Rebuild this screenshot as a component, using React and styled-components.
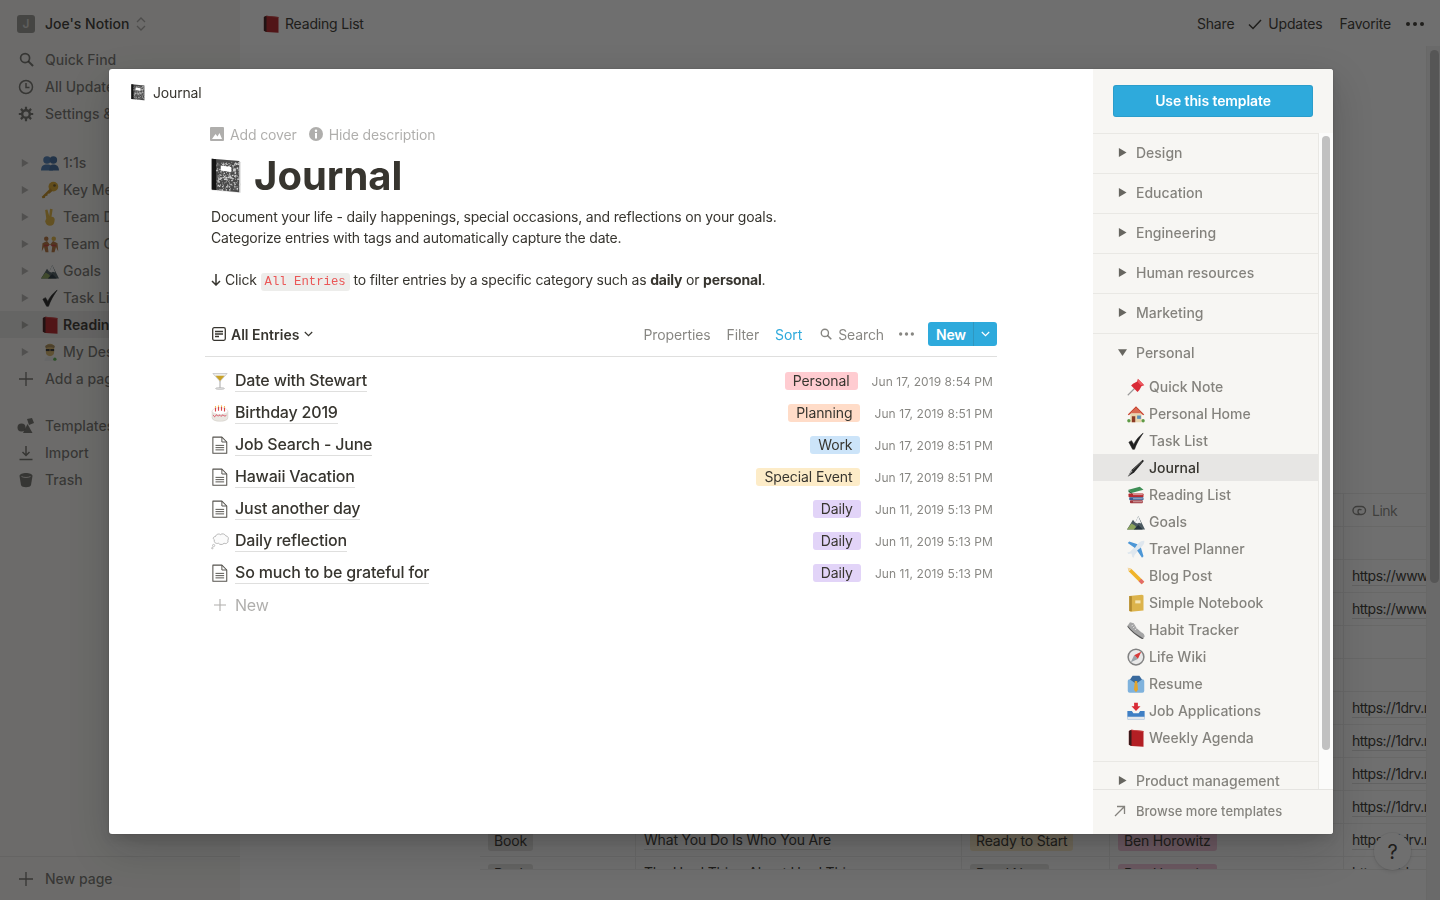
import React from 'react';
import styled, { createGlobalStyle } from 'styled-components';

const GlobalStyle = createGlobalStyle`
  html, body {
    margin: 0;
    height: 100%;
    overflow: hidden;
  }
  body {
    font-family: Inter, "Liberation Sans", sans-serif;
    color: #37352f;
    -webkit-font-smoothing: antialiased;
  }
  #root { height: 100%; }
`;

const BLUE = '#2eaadc';
const DIM = 'rgba(55, 53, 47, 0.6)';
const FAINT = 'rgba(55, 53, 47, 0.4)';
const LINE = 'rgba(55, 53, 47, 0.09)';

/* ---------- little drawn icons ---------- */

const speckles = [];
let seed = 7;
for (let i = 0; i < 240; i++) {
  seed = (seed * 1103 + 12345) % 65536;
  const x = 3.5 + (seed % 155) / 10;
  seed = (seed * 1103 + 12345) % 65536;
  const y = 2.5 + (seed % 190) / 10;
  speckles.push([x, y, i % 3 === 0 ? 0.9 : 0.5]);
}

const emojiArt = {
  composition: (
    <>
      <polygon points="0.500,0.500 19,2 19.800,2.800 19.800,23.200 18.500,23.200 0.500,21.500" fill="#ddd" />
      <polygon points="0.500,0.500 18.800,2 18.800,22.800 0.500,21" fill="#4a4a4a" />
      <polygon points="0.500,0.500 3.400,0.800 3.400,21.300 0.500,21" fill="#151515" />
      {speckles.map(([x, y, s], i) => (
        <rect key={i} x={x} y={y} width={s} height={s} fill="#d2d2d2" />
      ))}
      <polygon points="6.500,5 13.500,6 13.500,9.400 6.500,8.400" fill="#fff" />
    </>
  ),
  page: (
    <>
      <path d="M2.500 1.500h12l6.500 6.500v15H2.500z" fill="#fff" stroke="#55534e" strokeWidth="1.400" strokeLinejoin="round" />
      <path d="M14.500 1.500V8H21M6 12.500h11.500M6 15.500h11.500M6 18.500h11.500" fill="none" stroke="#55534e" strokeWidth="1.300" />
    </>
  ),
  cocktail: (
    <>
      <path d="M2.500 2h19L12 12.500z" fill="#eee" stroke="#a9a9a9" strokeWidth=".7" />
      <path d="M6 5h12l-6 7z" fill="#c9a227" />
      <path d="M12 12v9.500" stroke="#a5a5a5" strokeWidth="1.300" />
      <ellipse cx="12" cy="22" rx="6" ry="1.300" fill="#ddd" stroke="#999" strokeWidth=".5" />
    </>
  ),
  cake: (
    <>
      <path d="M1.500 9.500h21v9c0 6-21 6-21 0z" fill="#e9e6e1" stroke="#c9c5bf" strokeWidth=".6" />
      <ellipse cx="12" cy="9.500" rx="10.500" ry="4.500" fill="#fff" stroke="#d8cbc2" strokeWidth=".6" />
      <path d="M3 14.500c1 3 2.500 3 3.500 .5s2.500 3 4 .5 2.500 3 4 0 2.500 2.500 6-.5" fill="none" stroke="#d8495c" strokeWidth="1.300" />
      <path d="M6 5v5M10 4v5M14 4v5M18 5v5" stroke="#d9434a" strokeWidth="1.500" />
      <path d="M6 3v1.500M10 2v1.500M14 2v1.500M18 3v1.500" stroke="#f2a928" strokeWidth="1.500" />
    </>
  ),
  thought: (
    <>
      <path d="M6 6c1-3.500 5-4 6.500-2.500 2.500-2 6-1 7 1.500 3.500 .5 4.500 3.500 3 6 1 3-2 5.500-5 4-2.500 2.500-6 2-7.500 0-3.500 1-6.500-1-5.500-4.500C2 9 3 6 6 6z" fill="#fbfbfb" stroke="#a9a9a9" strokeWidth="1.100" />
      <circle cx="3.500" cy="18" r="1.500" fill="#fbfbfb" stroke="#a0a0a0" strokeWidth=".8" />
      <circle cx="1.800" cy="21.500" r="1" fill="#fbfbfb" stroke="#a0a0a0" strokeWidth=".8" />
    </>
  ),
  busts: (
    <>
      <circle cx="8" cy="8" r="5" fill="#4d7cb3" />
      <circle cx="16.500" cy="8" r="5" fill="#3f6a9e" />
      <path d="M0 22c0-6 3-8 8-8s8 2 8 8z" fill="#4d7cb3" />
      <path d="M11 22c0-6 2-8 5.500-8S24 16 24 22z" fill="#3f6a9e" />
    </>
  ),
  key: (
    <>
      <circle cx="16.500" cy="7.500" r="6.500" fill="#dca72e" />
      <circle cx="18" cy="6" r="1.800" fill="#6f5a2a" />
      <path d="M12.500 9.500L1 21l1 2 3-.5 1-2.500 2.500-.5.500-2.500 2.500-.5 4-3.500z" fill="#c28c22" />
    </>
  ),
  peace: <path d="M7 14L5.500 2.500 8.500 2l2.500 8.500L12 1l3.500.5-1.500 10c3.500 0 5 2 4 6-.5 4-2.500 6-6 6s-5.500-2-6.500-6z" fill="#e0b33f" />,
  wrestlers: (
    <>
      <circle cx="7" cy="5" r="3" fill="#b5713a" />
      <circle cx="17" cy="5" r="3" fill="#e0b33f" />
      <path d="M2 11l6-3 4 5-3 2 1 8H6l-2-7-3 6zM22 11l-6-3-4 5 3 2-1 8h4l2-7 3 6z" fill="#b5713a" />
      <path d="M4 14h6M14 14h6" stroke="#c93d3d" strokeWidth="1.800" />
    </>
  ),
  mountain: (
    <>
      <path d="M0 22L8 9l3 4 4-9 9 18z" fill="#4b5a60" />
      <path d="M15 4l-4 9 3 1 2-1 3 1z" fill="#f3f3f3" />
      <path d="M0 22l6-8 5 3 3 5z" fill="#8aa35b" />
      <path d="M9 22l6-6 6 6z" fill="#25333d" />
    </>
  ),
  check: <path d="M2.500 13.500l3.500-2 3 5C12 10.500 16 5.500 21.500 1.500 16.500 8.500 12.500 15.500 10 23H7.500z" fill="#1f1f1f" stroke="#1f1f1f" strokeWidth=".8" strokeLinejoin="round" />,
  redbook: (
    <>
      <path d="M2.500 2.500l3.500-1.500 16 1.500V23.500L6 22.500l-3.500-1.500z" fill="#b31f24" />
      <path d="M2.500 2.500L6 1v21.500L2.500 21z" fill="#3a1a1a" />
      <path d="M6 1l16 1.500v1L6 2z" fill="#d04a4a" />
    </>
  ),
  agent: (
    <>
      <path d="M6.500 6.500c0-3.500 2-5.500 5.500-5.500s5.500 2 5.500 5.500v5.500c0 3.500-2 5.500-5.500 5.500S6.500 15.500 6.500 12z" fill="#d8b469" />
      <path d="M6.500 7c1-2 10-2 11 0l1-2.500c-1-3.500-12-3.500-13 0z" fill="#a98a55" />
      <rect x="6.500" y="8" width="5" height="2.800" fill="#333" />
      <rect x="12.500" y="8" width="5" height="2.800" fill="#333" />
      <path d="M4.500 24c0-4.500 3-6.500 7.500-6.500s7.500 2 7.500 6.500z" fill="#ececec" />
      <circle cx="18.500" cy="21.500" r="2.200" fill="#5ab04d" />
    </>
  ),
  pin: (
    <>
      <path d="M1 23l9-9" stroke="#9a9a9a" strokeWidth="1.500" />
      <path d="M14.500 1l8.500 8.500-3.500 1-3 5.500-2.500 2.500-8.500-8.500L8 7.500l5.500-3z" fill="#d92b36" />
      <path d="M15.500 2l6.500 6.500-3.500 1-4.500-4.500z" fill="#ee5b62" />
    </>
  ),
  house: (
    <>
      <path d="M4.500 11h15v12h-15z" fill="#e8d5ae" />
      <path d="M1 12.500L12 1.500l11 11-1.500 1L12 4.500 2.500 13.500z" fill="#c9432f" />
      <path d="M5 11l7-7 7 7z" fill="#d9694f" />
      <rect x="6.500" y="15" width="4.500" height="8" fill="#8b3a24" />
      <rect x="13.500" y="14" width="5" height="4.500" fill="#5a8fb8" />
      <circle cx="2.500" cy="21" r="2.200" fill="#5e9a45" />
      <circle cx="21.500" cy="21" r="2.200" fill="#5e9a45" />
    </>
  ),
  pen: (
    <>
      <path d="M1 23.500L6 14.500 21 1l1.500 1.500L9.500 18z" fill="#222" />
      <path d="M1 23.500l5-9 1.500 1.500z" fill="#aaa" />
      <path d="M8 14.500L20 3.500" stroke="#8c8c8c" strokeWidth=".7" />
    </>
  ),
  books: (
    <>
      <path d="M2 5l15-4 5 4-15 4z" fill="#3f8f56" />
      <path d="M2 5l5 4v2L2 8z" fill="#2c6a3f" />
      <rect x="2" y="10" width="20" height="5" rx="1" fill="#b62b30" />
      <rect x="3" y="15" width="19" height="4" rx="1" fill="#3a5f96" />
      <rect x="4" y="19" width="17" height="4" rx="1" fill="#a2383f" />
      <path d="M8 11.500h13M8 17h13M8 21h12" stroke="#eee" strokeWidth=".8" />
    </>
  ),
  plane: (
    <>
      <path d="M23 1c-2-.5-5 .5-7 2.500L4 15.500l-3.500 1 1 2 4.500-.5 1 4.500 2 1 1-3.500L20.500 8C22.500 6 23.500 3 23 1z" fill="#dfe7ee" />
      <path d="M14 5.500L3 2 1 4l9.500 6.500zM18.500 10l3.500 11.500-2 2L13.500 14z" fill="#4d97d6" />
    </>
  ),
  pencil: (
    <>
      <path d="M1 1l5 1.500L23 19.500 19.500 23 2.500 6z" fill="#f0b429" />
      <path d="M1 1l5 1.500L2.500 6z" fill="#f3d9ad" />
      <path d="M19 15.500l4 4L19.500 23l-4-4z" fill="#e36b6b" />
    </>
  ),
  notebook: (
    <>
      <path d="M3 2.500l17-1.500 2 1V22L5 23.500l-2-1z" fill="#dcb34b" />
      <path d="M3 2.500l3.500 .5v20L3 22.500z" fill="#b38b2f" />
      <rect x="11" y="8.500" width="7" height="4" fill="#f4e4b4" />
    </>
  ),
  shoe: (
    <>
      <path d="M4 1.500l5 1.500 4 6.500 6 5.500c3 1 4.500 3.500 4.500 6l-2.500 2.500C14 19 6 12.500 1 6z" fill="#a5a5a5" />
      <path d="M1 6c5 6.500 13 13 21.500 17.500l-2.500.5C12 19.500 4.500 13 .5 7.500z" fill="#555" />
      <path d="M8 5L6 7M10 7.500l-2 2M12.500 10l-2 2" stroke="#eee" strokeWidth="1.100" />
    </>
  ),
  compass: (
    <>
      <circle cx="12" cy="12" r="10.500" fill="#e9e9e9" stroke="#828282" strokeWidth="2" />
      <path d="M19 5l-9.500 4.500 5 5z" fill="#d83a3a" />
      <path d="M5 19l4.500-9.500 5 5z" fill="#9aa2a8" />
    </>
  ),
  shirt: (
    <>
      <rect x="1" y="5.500" width="22" height="18" rx="2.500" fill="#7fb2dc" />
      <path d="M7.500 1h9l3.500 5-8 5.500L4 6z" fill="#396a9d" />
      <path d="M10.500 8h3l1.200 11.500-2.700 3.500-2.700-3.500z" fill="#e3a52e" />
    </>
  ),
  inbox: (
    <>
      <path d="M9.500 1h5v4.500h3.500L12 12 6 5.500h3.500z" fill="#d92b36" />
      <path d="M.5 12h6l2 3h7l2-3h6v9.500a2 2 0 01-2 2h-19a2 2 0 01-2-2z" fill="#3f7fc4" />
      <path d="M.5 19.500h23v2a2 2 0 01-2 2h-19a2 2 0 01-2-2z" fill="#e5e8eb" />
    </>
  ),
};

const EmojiSvg = styled.svg`
  display: block;
  flex-shrink: 0;
  width: ${(p) => p.$size}px;
  height: ${(p) => p.$size}px;
`;

const Emoji = ({ name, size = 18 }) => (
  <EmojiSvg $size={size} viewBox="0 0 24 24">
    {emojiArt[name]}
  </EmojiSvg>
);

const Glyph = styled.svg`
  display: block;
  flex-shrink: 0;
  width: ${(p) => p.$w || 16}px;
  height: ${(p) => p.$h || p.$w || 16}px;
`;

const Triangle = ({ down, $w = 9 }) => (
  <Glyph $w={$w} viewBox="0 0 10 10">
    <path d={down ? 'M0 1.500h10L5 9z' : 'M1 0l8.500 5L1 10z'} fill="currentColor" />
  </Glyph>
);

const SearchIcon = ({ $w = 16 }) => (
  <Glyph $w={$w} viewBox="0 0 16 16" fill="none" stroke="currentColor" strokeWidth="1.800">
    <circle cx="6.500" cy="6.500" r="4.800" />
    <path d="M10 10l5 5" strokeWidth="2.200" />
  </Glyph>
);

const ClockIcon = () => (
  <Glyph viewBox="0 0 16 16" fill="none" stroke="currentColor" strokeWidth="1.500">
    <circle cx="8" cy="8" r="6.500" />
    <path d="M8 4v4.500h3.500" />
  </Glyph>
);

const GearIcon = () => (
  <Glyph viewBox="0 0 16 16" fill="none" stroke="currentColor">
    <circle cx="8" cy="8" r="3.800" strokeWidth="2.400" />
    <path d="M8 .8v2.400M8 12.800v2.400M.8 8h2.400M12.800 8h2.400M2.900 2.900l1.700 1.700M11.400 11.400l1.700 1.700M13.100 2.900l-1.700 1.700M4.600 11.400l-1.700 1.700" strokeWidth="2.200" />
  </Glyph>
);

const PlusIcon = ({ $w = 14 }) => (
  <Glyph $w={$w} viewBox="0 0 14 14" fill="none" stroke="currentColor" strokeWidth="1.300">
    <path d="M7 0v14M0 7h14" />
  </Glyph>
);

const TemplatesIcon = () => (
  <Glyph $w={18} viewBox="0 0 18 18" fill="currentColor">
    <circle cx="4.500" cy="10.500" r="4" />
    <path d="M10 2l5-1 2 5-5 2z" />
    <path d="M10.500 7l5 9H6z" />
  </Glyph>
);

const ImportIcon = () => (
  <Glyph viewBox="0 0 16 16" fill="none" stroke="currentColor" strokeWidth="1.500">
    <path d="M8 1v9M4.500 7L8 10.500 11.500 7M1.500 14.500h13" />
  </Glyph>
);

const TrashIcon = () => (
  <Glyph viewBox="0 0 16 16" fill="currentColor">
    <path d="M1.500 4c0-4 13-4 13 0l-1.500 9c-.5 3-9.500 3-10 0z" />
    <path d="M3.500 4.500c2 1.300 7 1.300 9 0" stroke="#f7f6f3" strokeWidth=".8" fill="none" />
  </Glyph>
);

const ChevronsIcon = () => (
  <Glyph $w={10} $h={14} viewBox="0 0 10 14" fill="none" stroke="currentColor" strokeWidth="1.300">
    <path d="M1 5l4-4 4 4M1 9l4 4 4-4" />
  </Glyph>
);

const CheckIcon = () => (
  <Glyph $w={14} viewBox="0 0 14 14" fill="none" stroke="currentColor" strokeWidth="1.500">
    <path d="M1 7.500l4 4L13 3" />
  </Glyph>
);

const Dots = ({ $w = 18 }) => (
  <Glyph $w={$w} $h={4} viewBox="0 0 18 4" fill="currentColor">
    <circle cx="2" cy="2" r="2" />
    <circle cx="9" cy="2" r="2" />
    <circle cx="16" cy="2" r="2" />
  </Glyph>
);

const CoverIcon = () => (
  <Glyph $w={14} viewBox="0 0 14 14">
    <rect width="14" height="14" rx="1" fill="currentColor" />
    <path d="M2 12l3.500-5 2 2.500L9.500 6 12 12z" fill="#fff" />
  </Glyph>
);

const InfoIcon = () => (
  <Glyph $w={14} viewBox="0 0 14 14">
    <circle cx="7" cy="7" r="7" fill="currentColor" />
    <rect x="6" y="6" width="2" height="5.500" fill="#fff" />
    <circle cx="7" cy="3.800" r="1.200" fill="#fff" />
  </Glyph>
);

const ViewIcon = () => (
  <Glyph $w={14} viewBox="0 0 14 14" fill="none" stroke="currentColor" strokeWidth="1.300">
    <rect x=".7" y=".7" width="12.600" height="12.600" rx="1.500" />
    <path d="M3 4.500h8M3 7h8M3 9.500h4" />
  </Glyph>
);

const SmallChevron = ({ $w = 9 }) => (
  <Glyph $w={$w} $h={$w * 0.67} viewBox="0 0 9 6" fill="none" stroke="currentColor" strokeWidth="1.200">
    <path d="M.8 1l3.700 3.700L8.200 1" />
  </Glyph>
);

const ArrowOut = () => (
  <Glyph $w={12} viewBox="0 0 12 12" fill="none" stroke="currentColor" strokeWidth="1.300">
    <path d="M1 11L10.500 1.500M3 1.500h7.500V9" />
  </Glyph>
);

const LinkSwirl = () => (
  <Glyph $w={15} $h={13} viewBox="0 0 15 13" fill="none" stroke="currentColor" strokeWidth="1.400">
    <path d="M9 10.500H5a4 4 0 010-8h4.500a4 4 0 010 8c-2.500 0-3.500-1.500-3.500-3.300S8 4.800 9.500 6" />
  </Glyph>
);

const ArrowGlyph = () => (
  <Glyph $w={10} $h={12} viewBox="0 0 10 12" fill="none" stroke="currentColor" strokeWidth="1.500">
    <path d="M5 0v11M1 7l4 4 4-4" />
  </Glyph>
);

/* ---------- app behind the overlay ---------- */

const Shell = styled.div`
  display: flex;
  height: 100%;
  background: #fff;
`;

const Sidebar = styled.aside`
  display: flex;
  flex-direction: column;
  flex: 0 0 240px;
  background: #f7f6f3;
  color: rgba(25, 23, 17, 0.6);
  font-size: 14px;
  font-weight: 500;
`;

const Workspace = styled.div`
  display: flex;
  align-items: center;
  height: 46px;
  box-sizing: border-box;
  padding: 1px 0 0 17px;
  color: #37352f;
`;

const Avatar = styled.div`
  display: flex;
  align-items: center;
  justify-content: center;
  width: 18px;
  height: 18px;
  margin-right: 10px;
  border-radius: 3px;
  background: rgba(55, 53, 47, 0.5);
  color: rgba(255, 255, 255, 0.6);
  font-size: 12px;
  font-weight: 600;
`;

const WorkspaceChevrons = styled.span`
  margin-left: 7px;
  color: rgba(55, 53, 47, 0.4);
`;

const NavGroup = styled.nav`
  display: flex;
  flex-direction: column;
  margin-bottom: ${(p) => p.$gap || 0}px;
`;

const NavRow = styled.div`
  display: flex;
  align-items: center;
  height: 27px;
  padding-left: 18px;
  white-space: nowrap;
`;

const NavIcon = styled.span`
  display: flex;
  justify-content: center;
  width: 16px;
  margin-right: 11px;
`;

const TreeRow = styled.div`
  display: flex;
  align-items: center;
  height: 27px;
  padding-left: 21px;
  white-space: nowrap;
  background: ${(p) => (p.$active ? 'rgba(55, 53, 47, 0.08)' : 'transparent')};
  color: ${(p) => (p.$active ? '#37352f' : 'inherit')};
  font-weight: ${(p) => (p.$active ? 600 : 500)};
`;

const TreeToggle = styled.span`
  width: 20px;
  color: rgba(55, 53, 47, 0.35);
`;

const TreeLabel = styled.span`
  margin-left: 4px;
`;

const SidebarFill = styled.div`
  flex: 1;
`;

const NewPage = styled(NavRow)`
  height: 44px;
  box-sizing: border-box;
  border-top: 1px solid ${LINE};
`;

const Main = styled.main`
  display: flex;
  flex-direction: column;
  flex: 1;
  min-width: 0;
`;

const Topbar = styled.header`
  display: flex;
  align-items: center;
  flex: 0 0 46px;
  box-sizing: border-box;
  padding: 1px 16px 0 22px;
  font-size: 14px;
  letter-spacing: -0.19px;
`;

const Crumb = styled.div`
  display: flex;
  align-items: center;
  gap: 5px;
  flex: 1;
`;

const TopAction = styled.span`
  display: flex;
  align-items: center;
  gap: 6px;
  margin-left: ${(p) => p.$gap}px;
`;

const Stage = styled.div`
  display: flex;
  flex: 1;
  min-height: 0;
`;

const Scroller = styled.div`
  flex: 1;
  min-width: 0;
  padding-left: 240px;
  border-right: 1px solid ${LINE};
`;

const TableClip = styled.div`
  height: 824px;
  padding-top: 447px;
  box-sizing: border-box;
  overflow: hidden;
  border-bottom: 1px solid ${LINE};
`;

const TableRow = styled.div`
  display: grid;
  grid-template-columns: 156px 326px 148px 234px 1fr;
  height: 33px;
  box-sizing: border-box;
  border-top: 1px solid ${LINE};
  font-size: 14px;
  letter-spacing: -0.17px;
`;

const Cell = styled.div`
  display: flex;
  align-items: center;
  gap: 5px;
  padding: 1px 8px 0;
  overflow: hidden;
  white-space: nowrap;
  border-right: 1px solid ${LINE};
  color: ${(p) => (p.$head ? DIM : 'inherit')};
  &:last-child {
    border-right: 0;
    letter-spacing: -0.5px;
  }
`;

const Underlined = styled.span`
  border-bottom: 1px solid rgba(55, 53, 47, 0.16);
  line-height: 1.300;
`;

const BackTag = styled.span`
  padding: 0 6px;
  border-radius: 3px;
  line-height: 20px;
  background: ${(p) => p.$bg};
`;

const ScrollTrack = styled.div`
  flex: 0 0 13px;
  padding: 4px 1px 0 3px;
  box-sizing: border-box;
  background: #f2f2f2;
`;

const ScrollThumb = styled.div`
  height: 533px;
  border-radius: 5px;
  background: #c1c1c1;
`;

const HelpButton = styled.div`
  position: absolute;
  right: 29px;
  bottom: 30px;
  display: flex;
  align-items: center;
  justify-content: center;
  width: 37px;
  height: 37px;
  border-radius: 50%;
  background: #fff;
  box-shadow: 0 0 0 1px rgba(15, 15, 15, 0.05), 0 2px 4px rgba(15, 15, 15, 0.1);
  font-size: 20px;
`;

/* ---------- modal ---------- */

const Overlay = styled.div`
  position: fixed;
  inset: 0;
  background: rgba(15, 15, 15, 0.6);
`;

const Modal = styled.div`
  display: flex;
  width: 1224px;
  height: 765px;
  margin: 69px 0 0 109px;
  border-radius: 3px;
  overflow: hidden;
  background: #fff;
  box-shadow: 0 0 0 1px rgba(15, 15, 15, 0.05), 0 5px 10px rgba(15, 15, 15, 0.1), 0 15px 40px rgba(15, 15, 15, 0.2);
`;

const Preview = styled.section`
  flex: 1;
  min-width: 0;
`;

const PreviewHead = styled.div`
  display: flex;
  align-items: center;
  gap: 5px;
  height: 46px;
  padding-left: 22px;
  font-size: 14px;
  letter-spacing: -0.17px;
`;

const Doc = styled.div`
  display: flex;
  flex-direction: column;
  width: 792px;
  margin-left: 96px;
  padding-top: 7px;
  font-size: 14px;
  letter-spacing: -0.19px;
`;

const DocControls = styled.div`
  display: flex;
  gap: 12px;
  height: 24px;
  align-items: center;
  padding-left: 5px;
  color: ${FAINT};
  letter-spacing: -0.13px;
`;

const DocControl = styled.span`
  display: flex;
  align-items: center;
  gap: 6px;
`;

const DocTitle = styled.h1`
  display: flex;
  align-items: center;
  gap: 7px;
  height: 56px;
  margin: 2px 0 0 6px;
  font-size: 40px;
  font-weight: 700;
  line-height: 1;
  letter-spacing: 0;
`;

const DocText = styled.p`
  margin: ${(p) => p.$top || 0}px 0 0 6px;
  line-height: 21px;
  white-space: nowrap;
`;

const Code = styled.code`
  padding: 2px 4px;
  border-radius: 3px;
  background: rgba(135, 131, 120, 0.15);
  color: #eb5757;
  font-family: "Liberation Mono", monospace;
  font-size: 12.3px;
  letter-spacing: 0;
`;

const ArrowDown = styled.span`
  display: inline-block;
  vertical-align: -1px;
  margin-right: 4px;
`;

const ViewBar = styled.div`
  display: flex;
  align-items: center;
  height: 44px;
  margin-top: 19px;
  padding-left: 7px;
  border-bottom: 1px solid rgba(55, 53, 47, 0.16);
  letter-spacing: -0.1px;
`;

const ViewName = styled.div`
  display: flex;
  align-items: center;
  gap: 5px;
  flex: 1;
  font-weight: 600;
  letter-spacing: 0;
`;

const ViewTool = styled.span`
  display: flex;
  align-items: center;
  gap: 6px;
  margin-right: ${(p) => p.$gap || 16}px;
  color: ${(p) => (p.$active ? BLUE : DIM)};
`;

const NewButton = styled.div`
  display: flex;
  align-items: stretch;
  height: 24px;
  border-radius: 3px;
  background: ${BLUE};
  color: #fff;
  font-weight: 600;
  letter-spacing: -0.2px;
`;

const NewLabel = styled.span`
  display: flex;
  align-items: center;
  padding: 0 8px;
  width: 46px;
  box-sizing: border-box;
  border-right: 1px solid rgba(55, 53, 47, 0.16);
`;

const NewCaret = styled.span`
  display: flex;
  align-items: center;
  justify-content: center;
  width: 23px;
`;

const Rows = styled.div`
  display: flex;
  flex-direction: column;
  padding-top: 8px;
`;

const Row = styled.div`
  display: flex;
  align-items: center;
  height: 32px;
  padding: 0 4px 0 6px;
`;

const RowIcon = styled.span`
  display: flex;
  justify-content: center;
  width: 18px;
  margin-right: 6px;
`;

const RowTitle = styled.span`
  border-bottom: 1px solid rgba(55, 53, 47, 0.16);
  font-size: 16px;
  font-weight: 500;
  line-height: 21px;
`;

const RowSpacer = styled.span`
  flex: 1;
`;

const tagColors = {
  pink: '#ffccd1',
  orange: '#ffdcc8',
  blue: '#cce4f9',
  yellow: '#fdecc8',
  purple: '#e2d4f8',
};

const Tag = styled.span`
  padding: 0 8px;
  border-radius: 3px;
  background: ${(p) => tagColors[p.$tone]};
  font-size: 14px;
  line-height: 18px;
  letter-spacing: -0.1px;
`;

const RowDate = styled.span`
  margin-left: 14px;
  color: ${DIM};
  font-size: 12px;
  letter-spacing: 0.08px;
`;

const AddRow = styled(Row)`
  color: ${FAINT};
  font-size: 16px;
`;

/* ---------- template picker ---------- */

const Picker = styled.aside`
  display: flex;
  flex-direction: column;
  flex: 0 0 240px;
  background: #f7f6f3;
  font-size: 14px;
  font-weight: 500;
  color: ${DIM};
`;

const PickerTop = styled.div`
  flex: 0 0 64px;
  padding: 16px 20px 0;
  box-sizing: border-box;
`;

const UseButton = styled.div`
  display: flex;
  align-items: center;
  justify-content: center;
  height: 32px;
  padding-bottom: 1px;
  box-sizing: border-box;
  border-radius: 3px;
  background: ${BLUE};
  box-shadow: inset 0 0 0 1px rgba(15, 15, 15, 0.08);
  color: #fff;
  font-weight: 600;
  letter-spacing: -0.1px;
`;

const PickerBody = styled.div`
  display: flex;
  flex: 1;
  min-height: 0;
  border-bottom: 1px solid ${LINE};
`;

const Sections = styled.div`
  flex: 1;
  min-width: 0;
  overflow: hidden;
  border-top: 1px solid rgba(55, 53, 47, 0.07);
  border-right: 1px solid rgba(55, 53, 47, 0.07);
`;

const SectionHead = styled.div`
  display: flex;
  align-items: center;
  height: 39px;
  box-sizing: border-box;
  padding: 0 0 2px 25px;
  color: ${DIM};
`;

const SectionToggle = styled.span`
  width: 18px;
  color: rgba(55, 53, 47, 0.75);
`;

const Section = styled.div`
  border-bottom: 1px solid rgba(55, 53, 47, 0.07);
`;

const SectionItems = styled.div`
  display: flex;
  flex-direction: column;
  padding-bottom: 10px;
`;

const Item = styled.div`
  display: flex;
  align-items: center;
  gap: 4px;
  height: 27px;
  padding-left: 34px;
  background: ${(p) => (p.$active ? 'rgba(55, 53, 47, 0.08)' : 'transparent')};
  color: ${(p) => (p.$active ? '#37352f' : DIM)};
`;

const PickerTrack = styled.div`
  flex: 0 0 14px;
  padding: 3px 3px 0 3px;
  box-sizing: border-box;
  background: #fbfbfa;
`;

const PickerThumb = styled.div`
  height: 614px;
  border-radius: 4px;
  background: #c1c1c1;
`;

const PickerFoot = styled.div`
  display: flex;
  align-items: center;
  gap: 10px;
  flex: 0 0 44px;
  box-sizing: border-box;
  padding: 0 0 2px 21px;
  font-size: 13px;
`;

/* ---------- data ---------- */

const tree = [
  ['busts', '1:1s'],
  ['key', 'Key Meetings'],
  ['peace', 'Team Directory'],
  ['wrestlers', 'Team Goals'],
  ['mountain', 'Goals'],
  ['check', 'Task List'],
  ['redbook', 'Reading List', true],
  ['agent', 'My Desk'],
];

const entries = [
  ['cocktail', 'Date with Stewart', 'Personal', 'pink', 'Jun 17, 2019 8:54 PM'],
  ['cake', 'Birthday 2019', 'Planning', 'orange', 'Jun 17, 2019 8:51 PM'],
  ['page', 'Job Search - June', 'Work', 'blue', 'Jun 17, 2019 8:51 PM'],
  ['page', 'Hawaii Vacation', 'Special Event', 'yellow', 'Jun 17, 2019 8:51 PM'],
  ['page', 'Just another day', 'Daily', 'purple', 'Jun 11, 2019 5:13 PM'],
  ['thought', 'Daily reflection', 'Daily', 'purple', 'Jun 11, 2019 5:13 PM'],
  ['page', 'So much to be grateful for', 'Daily', 'purple', 'Jun 11, 2019 5:13 PM'],
];

const personal = [
  ['pin', 'Quick Note'],
  ['house', 'Personal Home'],
  ['check', 'Task List'],
  ['pen', 'Journal', true],
  ['books', 'Reading List'],
  ['mountain', 'Goals'],
  ['plane', 'Travel Planner'],
  ['pencil', 'Blog Post'],
  ['notebook', 'Simple Notebook'],
  ['shoe', 'Habit Tracker'],
  ['compass', 'Life Wiki'],
  ['shirt', 'Resume'],
  ['inbox', 'Job Applications'],
  ['redbook', 'Weekly Agenda'],
];

const tableRows = [
  { link: 'Link', head: true },
  {},
  { link: 'https://www.amazon.com' },
  { link: 'https://www.amazon.com' },
  {},
  {},
  { link: 'https://1drv.ms/b/s' },
  { link: 'https://1drv.ms/b/s' },
  { link: 'https://1drv.ms/b/s' },
  { link: 'https://1drv.ms/b/s' },
  { type: 'Book', title: 'What You Do Is Who You Are', status: 'Ready to Start', statusBg: '#fdecc8', author: 'Ben Horowitz', link: 'https://1drv.ms/b/s' },
  { type: 'Book', title: 'The Hard Thing About Hard Things', status: 'Read Next', statusBg: '#e3e2e0', author: 'Ben Horowitz', link: 'https://1drv.ms/b/s' },
];

const App = () => (
  <>
    <GlobalStyle />
    <Shell>
      <Sidebar>
        <Workspace>
          <Avatar>J</Avatar>
          Joe's Notion
          <WorkspaceChevrons><ChevronsIcon /></WorkspaceChevrons>
        </Workspace>
        <NavGroup $gap={22}>
          <NavRow><NavIcon><SearchIcon $w={15} /></NavIcon>Quick Find</NavRow>
          <NavRow><NavIcon><ClockIcon /></NavIcon>All Updates</NavRow>
          <NavRow><NavIcon><GearIcon /></NavIcon>Settings &amp; Members</NavRow>
        </NavGroup>
        <NavGroup $gap={20}>
          {tree.map(([icon, label, active]) => (
            <TreeRow key={label} $active={active}>
              <TreeToggle><Triangle $w={8} /></TreeToggle>
              <Emoji name={icon} />
              <TreeLabel>{label}</TreeLabel>
            </TreeRow>
          ))}
          <NavRow><NavIcon><PlusIcon /></NavIcon>Add a page</NavRow>
        </NavGroup>
        <NavGroup>
          <NavRow><NavIcon><TemplatesIcon /></NavIcon>Templates</NavRow>
          <NavRow><NavIcon><ImportIcon /></NavIcon>Import</NavRow>
          <NavRow><NavIcon><TrashIcon /></NavIcon>Trash</NavRow>
        </NavGroup>
        <SidebarFill />
        <NewPage><NavIcon><PlusIcon /></NavIcon>New page</NewPage>
      </Sidebar>
      <Main>
        <Topbar>
          <Crumb><Emoji name="redbook" />Reading List</Crumb>
          <TopAction $gap={0}>Share</TopAction>
          <TopAction $gap={14}><CheckIcon />Updates</TopAction>
          <TopAction $gap={17}>Favorite</TopAction>
          <TopAction $gap={15}><Dots /></TopAction>
        </Topbar>
        <Stage>
          <Scroller>
            <TableClip>
              {tableRows.map((row, i) => (
                <TableRow key={i}>
                  <Cell>{row.type && <BackTag $bg="#e3e2e0">{row.type}</BackTag>}</Cell>
                  <Cell>{row.title && <Underlined>{row.title}</Underlined>}</Cell>
                  <Cell>{row.status && <BackTag $bg={row.statusBg}>{row.status}</BackTag>}</Cell>
                  <Cell>{row.author && <BackTag $bg="#f5c6dc">{row.author}</BackTag>}</Cell>
                  <Cell $head={row.head}>
                    {row.head ? <><LinkSwirl />{row.link}</> : row.link && <Underlined>{row.link}</Underlined>}
                  </Cell>
                </TableRow>
              ))}
            </TableClip>
          </Scroller>
          <ScrollTrack><ScrollThumb /></ScrollTrack>
        </Stage>
      </Main>
      <HelpButton>?</HelpButton>
    </Shell>
    <Overlay>
      <Modal>
        <Preview>
          <PreviewHead><Emoji name="composition" size={17} />Journal</PreviewHead>
          <Doc>
            <DocControls>
              <DocControl><CoverIcon />Add cover</DocControl>
              <DocControl><InfoIcon />Hide description</DocControl>
            </DocControls>
            <DocTitle><Emoji name="composition" size={36} />Journal</DocTitle>
            <DocText $top={2}>
              Document your life - daily happenings, special occasions, and reflections on your goals.
              <br />
              Categorize entries with tags and automatically capture the date.
            </DocText>
            <DocText $top={21}>
              <ArrowDown><ArrowGlyph /></ArrowDown>
              Click <Code>All Entries</Code> to filter entries by a specific category such as <strong>daily</strong> or <strong>personal</strong>.
            </DocText>
            <ViewBar>
              <ViewName><ViewIcon />All Entries<SmallChevron /></ViewName>
              <ViewTool>Properties</ViewTool>
              <ViewTool>Filter</ViewTool>
              <ViewTool $active $gap={18}>Sort</ViewTool>
              <ViewTool $gap={15}><SearchIcon $w={12} />Search</ViewTool>
              <ViewTool $gap={14}><Dots $w={15} /></ViewTool>
              <NewButton>
                <NewLabel>New</NewLabel>
                <NewCaret><SmallChevron $w={9} /></NewCaret>
              </NewButton>
            </ViewBar>
            <Rows>
              {entries.map(([icon, title, tag, tone, date]) => (
                <Row key={title}>
                  <RowIcon><Emoji name={icon} /></RowIcon>
                  <RowTitle>{title}</RowTitle>
                  <RowSpacer />
                  <Tag $tone={tone}>{tag}</Tag>
                  <RowDate>{date}</RowDate>
                </Row>
              ))}
              <AddRow>
                <RowIcon><PlusIcon $w={12} /></RowIcon>
                New
              </AddRow>
            </Rows>
          </Doc>
        </Preview>
        <Picker>
          <PickerTop><UseButton>Use this template</UseButton></PickerTop>
          <PickerBody>
            <Sections>
              {['Design', 'Education', 'Engineering', 'Human resources', 'Marketing'].map((name) => (
                <Section key={name}>
                  <SectionHead><SectionToggle><Triangle /></SectionToggle>{name}</SectionHead>
                </Section>
              ))}
              <Section>
                <SectionHead><SectionToggle><Triangle down /></SectionToggle>Personal</SectionHead>
                <SectionItems>
                  {personal.map(([icon, label, active]) => (
                    <Item key={label} $active={active}><Emoji name={icon} />{label}</Item>
                  ))}
                </SectionItems>
              </Section>
              <Section>
                <SectionHead><SectionToggle><Triangle /></SectionToggle>Product management</SectionHead>
              </Section>
            </Sections>
            <PickerTrack><PickerThumb /></PickerTrack>
          </PickerBody>
          <PickerFoot><ArrowOut />Browse more templates</PickerFoot>
        </Picker>
      </Modal>
    </Overlay>
  </>
);

export default App;
